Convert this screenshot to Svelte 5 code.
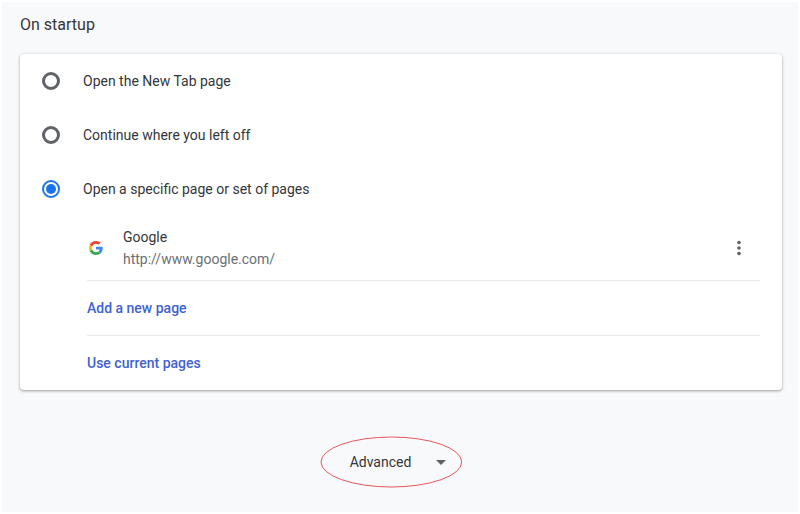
<script>
  const options = [
    { value: "newtab", label: "Open the New Tab page" },
    { value: "continue", label: "Continue where you left off" },
    { value: "specific", label: "Open a specific page or set of pages" },
  ];

  const pages = [{ title: "Google", url: "http://www.google.com/" }];

  let startup = $state("specific");
</script>

<main>
  <h2>On startup</h2>

  <section class="card">
    {#each options as option}
      <label class="option">
        <input type="radio" name="startup" value={option.value} bind:group={startup} />
        <span>{option.label}</span>
      </label>
    {/each}

    {#if startup === "specific"}
      <div class="pages">
        {#each pages as page}
          <div class="page">
            <svg class="favicon" viewBox="0 0 48 48" aria-hidden="true">
              <path fill="#ea4335" d="M24 9.5c3.54 0 6.71 1.22 9.21 3.6l6.85-6.85C35.9 2.38 30.47 0 24 0 14.62 0 6.51 5.38 2.56 13.22l7.98 6.19C12.43 13.72 17.74 9.5 24 9.5z" />
              <path fill="#4285f4" d="M46.98 24.55c0-1.57-.15-3.09-.38-4.55H24v9.02h12.94c-.58 2.96-2.26 5.48-4.78 7.18l7.73 6c4.51-4.18 7.09-10.36 7.09-17.65z" />
              <path fill="#fbbc05" d="M10.53 28.59c-.48-1.45-.76-2.99-.76-4.59s.27-3.14.76-4.59l-7.98-6.19C.92 16.46 0 20.12 0 24c0 3.88.92 7.54 2.56 10.78l7.97-6.19z" />
              <path fill="#34a853" d="M24 48c6.48 0 11.93-2.13 15.89-5.81l-7.73-6c-2.15 1.45-4.92 2.3-8.16 2.3-6.26 0-11.57-4.22-13.47-9.91l-7.98 6.19C6.51 42.62 14.62 48 24 48z" />
            </svg>
            <div class="info">
              <div>{page.title}</div>
              <div class="url">{page.url}</div>
            </div>
            <button class="more" aria-label="More actions">
              <svg width="22" height="22" viewBox="0 0 24 24" fill="#5f6368">
                <circle cx="12" cy="6" r="2"></circle>
                <circle cx="12" cy="12" r="2"></circle>
                <circle cx="12" cy="18" r="2"></circle>
              </svg>
            </button>
          </div>
        {/each}
        <div class="action"><button>Add a new page</button></div>
        <div class="action"><button>Use current pages</button></div>
      </div>
    {/if}
  </section>

  <button class="advanced">
    <span>Advanced</span>
    <svg width="10" height="5" viewBox="0 0 10 5" aria-hidden="true">
      <path d="M0 0h10L5 5z" fill="#5f6368" />
    </svg>
    <svg class="ring" viewBox="0 0 144 52" preserveAspectRatio="none" aria-hidden="true">
      <ellipse cx="72" cy="26" rx="71" ry="25" fill="none" stroke="#e8545c" />
    </svg>
  </button>
</main>

<style>
  :global(body) {
    background: #fff;
  }

  main {
    box-sizing: border-box;
    min-height: calc(100vh - 4px);
    margin: 2px;
    padding: 12px 16px 24px 18px;
    background: #f8f9fb;
    color: #35363a;
    font-family: Roboto, sans-serif;
    font-size: 14px;
    line-height: 22px;
    display: flex;
    flex-direction: column;
  }

  h2 {
    margin: 0 0 18px;
    font-size: 16px;
    font-weight: 400;
    line-height: 22px;
  }

  button {
    padding: 0;
    border: none;
    background: none;
    color: inherit;
    font: inherit;
    cursor: pointer;
  }

  .card {
    background: #fff;
    border-radius: 4px;
    box-shadow: 0 1px 2px rgba(60, 64, 67, 0.3), 0 1px 3px 1px rgba(60, 64, 67, 0.15);
  }

  .option {
    display: flex;
    align-items: center;
    gap: 23px;
    height: 54px;
    padding: 0 22px;
    cursor: pointer;
  }

  .option input {
    appearance: none;
    display: grid;
    place-items: center;
    box-sizing: border-box;
    width: 18px;
    height: 18px;
    margin: 0;
    border: 3px solid #5f6368;
    border-radius: 50%;
  }

  .option input:checked {
    border: 2px solid #1a73e8;
  }

  .option input:checked::before {
    content: "";
    width: 10px;
    height: 10px;
    border-radius: 50%;
    background: #1a73e8;
  }

  .pages {
    margin: 0 22px 0 67px;
  }

  .page {
    display: flex;
    align-items: center;
    height: 64px;
  }

  .favicon {
    width: 14px;
    height: 14px;
    margin: 0 20px 0 2px;
  }

  .info {
    flex: 1;
  }

  .url {
    color: #6b6f74;
  }

  .more {
    display: flex;
    margin-right: 10px;
  }

  .more svg {
    display: block;
  }

  .action {
    display: flex;
    align-items: center;
    height: 54px;
    border-top: 1px solid #e9eaec;
  }

  .action button {
    color: #4062d0;
    font-weight: 500;
  }

  .advanced {
    position: relative;
    display: flex;
    align-items: center;
    justify-content: center;
    align-self: center;
    gap: 25px;
    height: 52px;
    margin: 46px 20px 0 0;
    padding: 0 16px 0 30px;
  }

  .ring {
    position: absolute;
    inset: 0;
    width: 100%;
    height: 100%;
  }
</style>
